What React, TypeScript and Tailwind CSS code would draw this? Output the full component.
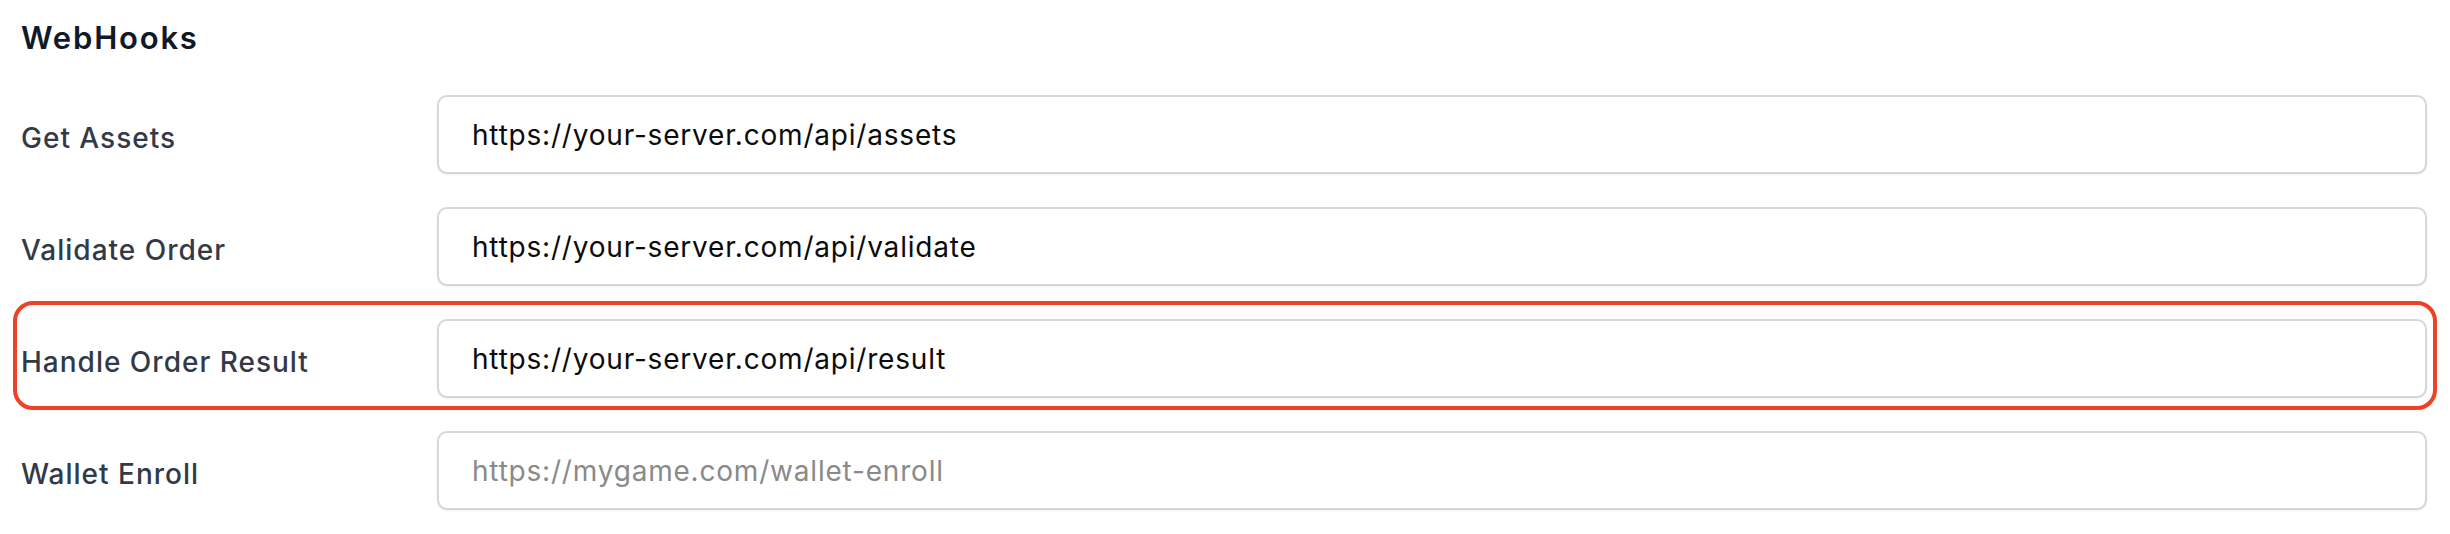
const hooks = [
  { label: 'Get Assets', value: 'https://your-server.com/api/assets', placeholder: '' },
  { label: 'Validate Order', value: 'https://your-server.com/api/validate', placeholder: '' },
  { label: 'Handle Order Result', value: 'https://your-server.com/api/result', placeholder: '', highlight: true },
  { label: 'Wallet Enroll', value: '', placeholder: 'https://mygame.com/wallet-enroll' },
];

export default function App() {
  return (
    <div className="min-h-[534px] w-full bg-white pl-[21px] pr-[23px] pt-[23px] font-['Inter',sans-serif]">
      <h2 className="text-[31px] font-semibold leading-[30px] tracking-[1.8px] text-[#111827]">WebHooks</h2>

      <div className="mt-[42px] flex flex-col gap-[33px]">
        {hooks.map((hook) => (
          <div key={hook.label} className="relative flex h-[79px] items-center">
            <label className="mt-[6px] w-[416px] shrink-0 text-[28px] font-medium tracking-[1px] text-[#333a47]">
              {hook.label}
            </label>
            <input
              readOnly
              defaultValue={hook.value}
              placeholder={hook.placeholder}
              className="h-full flex-1 rounded-[10px] border-2 border-[#d3d6dc] bg-white px-[33px] text-[28px] tracking-[0.8px] text-[#0b0b0b] shadow-[0_1px_2px_rgba(0,0,0,0.06)] outline-none placeholder:text-[#8a8a8a]"
            />
            {hook.highlight && (
              <div className="pointer-events-none absolute -top-[18px] -bottom-[12px] -left-[8px] -right-[10px] rounded-[20px] border-4 border-[#ee4126]" />
            )}
          </div>
        ))}
      </div>
    </div>
  );
}
